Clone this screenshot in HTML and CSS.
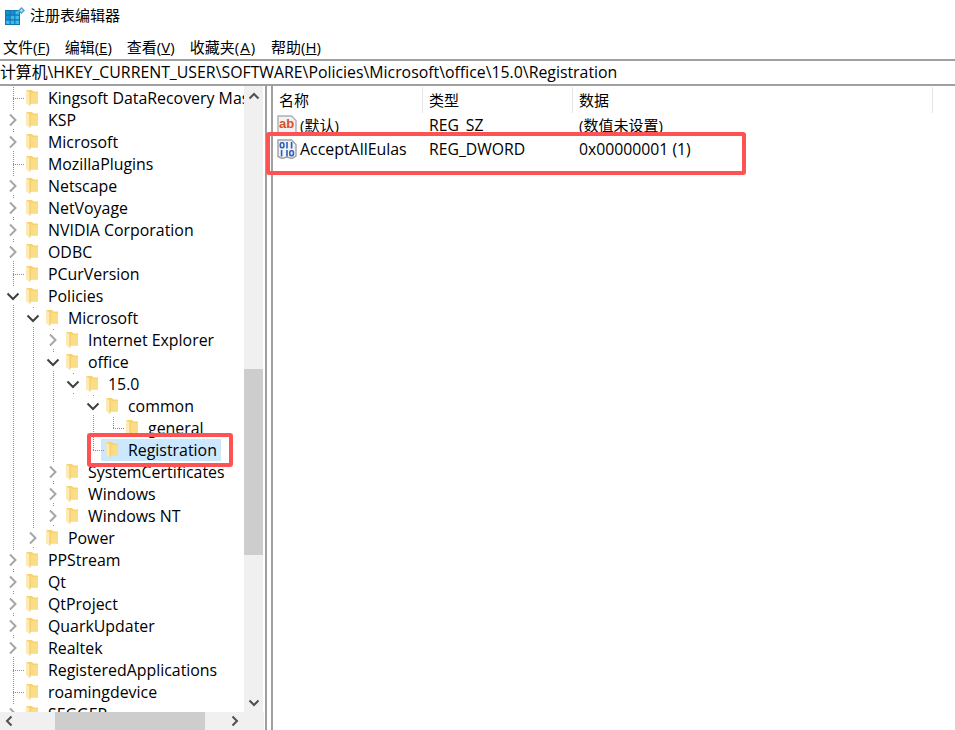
FILE: index.html
```html
<!DOCTYPE html>
<html lang="zh">
<head>
<meta charset="utf-8">
<title>注册表编辑器</title>
<link rel="stylesheet" href="styles.css">
</head>
<body>
<svg class="sprites" width="0" height="0" aria-hidden="true">
  <symbol id="folder" viewBox="0 0 12 16">
    <path d="M0.5 0H6L7.5 1.5H12V13.5H0.5Z" fill="#f7d26f"/>
    <path d="M4 3H12V13.5H4Z" fill="#fbdd85"/>
    <path d="M0.5 0.5L4 3V16L0.5 13.5Z" fill="#fdebb3"/>
    <path d="M4 3V15.5" stroke="#eebf58" stroke-width="0.8"/>
  </symbol>
  <symbol id="closed" viewBox="0 0 18 18">
    <path d="M6 3.5L11.5 9L6 14.5" fill="none" stroke="#a6a6a6" stroke-width="2"/>
  </symbol>
  <symbol id="open" viewBox="0 0 18 18">
    <path d="M3.5 6.5L9 12L14.5 6.5" fill="none" stroke="#404040" stroke-width="2"/>
  </symbol>
</svg>

<header class="titlebar">
  <svg class="app-icon" viewBox="0 0 20 18" width="20" height="18">
    <path d="M0 3H15V18H0Z" fill="#0f74b0"/>
    <path d="M1 4H4.6V7.6H1ZM5.7 4H9.3V7.6H5.7ZM1 8.7H4.6V12.3H1Z" fill="#1590d0"/>
    <path d="M10.4 4H14V7.6H10.4ZM5.7 8.7H9.3V12.3H5.7ZM10.4 8.7H14V12.3H10.4ZM1 13.4H4.6V17H1ZM5.7 13.4H9.3V17H5.7ZM10.4 13.4H14V17H10.4Z" fill="#3fb8ea"/>
    <path d="M16.5 0L20 3.5L16.5 7L13 3.5Z" fill="#4aa6d6"/>
    <path d="M16.5 2L18 3.5L16.5 5L15 3.5Z" fill="#bfe3f5"/>
  </svg>
  <span class="title">注册表编辑器</span>
</header>

<nav class="menubar">
  <span>文件(<u>F</u>)</span>
  <span>编辑(<u>E</u>)</span>
  <span>查看(<u>V</u>)</span>
  <span>收藏夹<span class="key-wide">(<u>A</u>)</span></span>
  <span>帮助(<u>H</u>)</span>
</nav>

<div class="address">计算机\HKEY_CURRENT_USER\SOFTWARE\Policies\Microsoft\office\15.0\Registration</div>

<main class="split">
  <section class="tree-pane">
    <div class="tree-area">
      <div class="tree">
        <div class="row"><i class="g h"></i><svg class="fd"><use href="#folder"/></svg><span>Kingsoft DataRecovery Master</span></div>
        <div class="row"><i class="g t"><svg class="ar"><use href="#closed"/></svg></i><svg class="fd"><use href="#folder"/></svg><span>KSP</span></div>
        <div class="row"><i class="g t"><svg class="ar"><use href="#closed"/></svg></i><svg class="fd"><use href="#folder"/></svg><span>Microsoft</span></div>
        <div class="row"><i class="g h"></i><svg class="fd"><use href="#folder"/></svg><span>MozillaPlugins</span></div>
        <div class="row"><i class="g t"><svg class="ar"><use href="#closed"/></svg></i><svg class="fd"><use href="#folder"/></svg><span>Netscape</span></div>
        <div class="row"><i class="g t"><svg class="ar"><use href="#closed"/></svg></i><svg class="fd"><use href="#folder"/></svg><span>NetVoyage</span></div>
        <div class="row"><i class="g t"><svg class="ar"><use href="#closed"/></svg></i><svg class="fd"><use href="#folder"/></svg><span>NVIDIA Corporation</span></div>
        <div class="row"><i class="g t"><svg class="ar"><use href="#closed"/></svg></i><svg class="fd"><use href="#folder"/></svg><span>ODBC</span></div>
        <div class="row"><i class="g h"></i><svg class="fd"><use href="#folder"/></svg><span>PCurVersion</span></div>
        <div class="row"><i class="g t"><svg class="ar"><use href="#open"/></svg></i><svg class="fd"><use href="#folder"/></svg><span>Policies</span></div>
        <div class="row"><i class="g v"></i><i class="g t"><svg class="ar"><use href="#open"/></svg></i><svg class="fd"><use href="#folder"/></svg><span>Microsoft</span></div>
        <div class="row"><i class="g v"></i><i class="g v"></i><i class="g t"><svg class="ar"><use href="#closed"/></svg></i><svg class="fd"><use href="#folder"/></svg><span>Internet Explorer</span></div>
        <div class="row"><i class="g v"></i><i class="g v"></i><i class="g t"><svg class="ar"><use href="#open"/></svg></i><svg class="fd"><use href="#folder"/></svg><span>office</span></div>
        <div class="row"><i class="g v"></i><i class="g v"></i><i class="g v"></i><i class="g t"><svg class="ar"><use href="#open"/></svg></i><svg class="fd"><use href="#folder"/></svg><span>15.0</span></div>
        <div class="row"><i class="g v"></i><i class="g v"></i><i class="g v"></i><i class="g"></i><i class="g t"><svg class="ar"><use href="#open"/></svg></i><svg class="fd"><use href="#folder"/></svg><span>common</span></div>
        <div class="row"><i class="g v"></i><i class="g v"></i><i class="g v"></i><i class="g"></i><i class="g v"></i><i class="g l"></i><svg class="fd"><use href="#folder"/></svg><span>general</span></div>
        <div class="row"><i class="g v"></i><i class="g v"></i><i class="g v"></i><i class="g"></i><i class="g l"></i><div class="sel"><svg class="fd"><use href="#folder"/></svg><span>Registration</span></div></div>
        <div class="row"><i class="g v"></i><i class="g v"></i><i class="g t"><svg class="ar"><use href="#closed"/></svg></i><svg class="fd"><use href="#folder"/></svg><span>SystemCertificates</span></div>
        <div class="row"><i class="g v"></i><i class="g v"></i><i class="g t"><svg class="ar"><use href="#closed"/></svg></i><svg class="fd"><use href="#folder"/></svg><span>Windows</span></div>
        <div class="row"><i class="g v"></i><i class="g v"></i><i class="g t"><svg class="ar"><use href="#closed"/></svg></i><svg class="fd"><use href="#folder"/></svg><span>Windows NT</span></div>
        <div class="row"><i class="g v"></i><i class="g t"><svg class="ar"><use href="#closed"/></svg></i><svg class="fd"><use href="#folder"/></svg><span>Power</span></div>
        <div class="row"><i class="g t"><svg class="ar"><use href="#closed"/></svg></i><svg class="fd"><use href="#folder"/></svg><span>PPStream</span></div>
        <div class="row"><i class="g t"><svg class="ar"><use href="#closed"/></svg></i><svg class="fd"><use href="#folder"/></svg><span>Qt</span></div>
        <div class="row"><i class="g t"><svg class="ar"><use href="#closed"/></svg></i><svg class="fd"><use href="#folder"/></svg><span>QtProject</span></div>
        <div class="row"><i class="g t"><svg class="ar"><use href="#closed"/></svg></i><svg class="fd"><use href="#folder"/></svg><span>QuarkUpdater</span></div>
        <div class="row"><i class="g t"><svg class="ar"><use href="#closed"/></svg></i><svg class="fd"><use href="#folder"/></svg><span>Realtek</span></div>
        <div class="row"><i class="g h"></i><svg class="fd"><use href="#folder"/></svg><span>RegisteredApplications</span></div>
        <div class="row"><i class="g h"></i><svg class="fd"><use href="#folder"/></svg><span>roamingdevice</span></div>
        <div class="row"><i class="g t"><svg class="ar"><use href="#closed"/></svg></i><svg class="fd"><use href="#folder"/></svg><span>SEGGER</span></div>
      </div>
      <div class="vscroll">
        <div class="sb-btn"><svg class="sb-ar" viewBox="0 0 12 8"><path d="M1.5 6.5L6 2L10.5 6.5" fill="none" stroke="#505050" stroke-width="2"/></svg></div>
        <div class="vtrack"><div class="vthumb"></div></div>
        <div class="sb-btn"><svg class="sb-ar" viewBox="0 0 12 8"><path d="M1.5 1.5L6 6L10.5 1.5" fill="none" stroke="#505050" stroke-width="2"/></svg></div>
      </div>
    </div>
    <div class="hscroll">
      <div class="hbtn"><svg class="hb-ar" viewBox="0 0 8 12"><path d="M6.5 1.5L2 6L6.5 10.5" fill="none" stroke="#505050" stroke-width="2"/></svg></div>
      <div class="htrack"><div class="hthumb"></div></div>
      <div class="hbtn"><svg class="hb-ar" viewBox="0 0 8 12"><path d="M1.5 1.5L6 6L1.5 10.5" fill="none" stroke="#505050" stroke-width="2"/></svg></div>
    </div>
  </section>

  <section class="list-pane">
    <div class="list-row list-head">
      <div class="hcell">名称</div>
      <div class="hcell">类型</div>
      <div class="hcell">数据</div>
    </div>
    <div class="list-row">
      <div class="name">
        <svg class="val-icon" viewBox="0 0 20 20" width="20" height="20">
          <path d="M1 1H14.5L19 5.5V17L15 19.5L10 18L5 19.5L1 17.5Z" fill="#f2f2f2" stroke="#b0b0b0" stroke-width="1.4"/>
          <text class="ab" x="2" y="13">ab</text>
        </svg>
        <span>(默认)</span>
      </div>
      <div class="latin">REG_SZ</div>
      <div>(数值未设置)</div>
    </div>
    <div class="list-row">
      <div class="name">
        <svg class="val-icon" viewBox="0 0 20 20" width="20" height="20">
          <path d="M1 1H14.5L19 5.5V17L15 19.5L10 18L5 19.5L1 17.5Z" fill="#f2f2f2" stroke="#a0a0a8" stroke-width="1.4"/>
          <g fill="none" stroke="#2a5fc0" stroke-width="1.6">
            <rect x="3.3" y="3.8" width="3.6" height="4.8" rx="1.4"/>
            <path d="M10 3V9.4M14.6 3V9.4M4.6 11V17.4M10 11V17.4"/>
            <rect x="12.8" y="11.8" width="3.6" height="4.8" rx="1.4"/>
          </g>
        </svg>
        <span class="latin-name">AcceptAllEulas</span>
      </div>
      <div class="latin">REG_DWORD</div>
      <div class="latin">0x00000001 (1)</div>
    </div>
  </section>
</main>

<div class="mark mark-tree"></div>
<div class="mark mark-list"></div>
</body>
</html>
```
FILE: styles.css
```css
* { box-sizing: border-box; }
html, body { margin: 0; height: 100%; }
body {
  position: relative;
  display: flex;
  flex-direction: column;
  width: 955px;
  height: 730px;
  overflow: hidden;
  background: #fff;
  color: #000;
  font: 15.9px/22px "Open Sans", "Noto Sans CJK SC", sans-serif;
}
.sprites { position: absolute; }

.titlebar { display: flex; align-items: flex-start; flex: 0 0 36px; padding: 7px 0 0 5px; gap: 5px; }
.app-icon { flex: none; }
.title { margin-top: -3px; font-size: 15px; }

.menubar { display: flex; flex: 0 0 23px; gap: 15px; padding-left: 3px; font-size: 15px; line-height: 22px; }
.key-wide { letter-spacing: 1px; }

.address {
  flex: 0 0 27px;
  border-top: 2px solid #a0a0a0;
  border-bottom: 2px solid #a0a0a0;
  font-size: 15.85px;
  line-height: 23px;
  white-space: nowrap;
}

.split { display: flex; flex: 1; min-height: 0; }

.tree-pane { display: flex; flex-direction: column; flex: 0 0 267px; padding-right: 1px; border-right: 2px solid #a0a0a0; }
.tree-area { display: flex; flex: 1; min-height: 0; }
.tree { flex: 0 0 244px; padding: 1px 0 0 3px; overflow: hidden; }
.row { display: flex; align-items: center; height: 22px; white-space: nowrap; }
.g { position: relative; flex: 0 0 20px; height: 22px; }
.v, .h, .t { background: repeating-linear-gradient(#8c8c8c 0 1px, transparent 1px 2px) no-repeat 10px 0 / 1px 100%; }
.l { background: repeating-linear-gradient(#8c8c8c 0 1px, transparent 1px 2px) no-repeat 10px 0 / 1px 50%; }
.h::after, .l::after {
  content: "";
  position: absolute;
  left: 10px;
  top: 11px;
  width: 11px;
  height: 1px;
  background: repeating-linear-gradient(90deg, #8c8c8c 0 1px, transparent 1px 2px);
}
.ar { display: block; width: 18px; height: 18px; margin: 2px 1px; background: #fff; }
.fd { flex: none; width: 12px; height: 16px; margin: 0 10px 0 3px; }
.sel { display: flex; align-items: center; height: 22px; margin-left: -2px; padding: 0 4px 0 2px; background: #cce8ff; }

.vscroll { display: flex; flex-direction: column; flex: 0 0 19px; background: #f0f0f0; }
.sb-btn { display: flex; align-items: center; justify-content: center; flex: 0 0 19px; }
.sb-ar { width: 12px; height: 8px; }
.vtrack { flex: 1; }
.vthumb { width: 100%; height: 186px; margin-top: 264px; background: #cdcdcd; }

.hscroll { display: flex; flex: 0 0 18px; background: #f0f0f0; }
.hbtn { display: flex; align-items: center; justify-content: center; flex: 0 0 18px; }
.hb-ar { width: 8px; height: 12px; }
.htrack { flex: 0 0 208px; }
.hthumb { width: 150px; height: 100%; margin-left: 37px; background: #cdcdcd; }

.list-pane { flex: 1; margin-left: 4px; padding-top: 1px; border-left: 2px solid #a0a0a0; }
.list-row { display: grid; grid-template-columns: 150px 150px 360px; height: 24px; line-height: 24px; font-size: 15px; }
.list-row > div { padding-left: 6px; white-space: nowrap; }
.list-row > .name { display: flex; align-items: center; padding-left: 4px; gap: 3px; }
.list-head { height: 26px; line-height: 26px; }
.hcell { border-right: 1px solid #e5e5e5; }
.latin { font-size: 15.75px; }
.latin-name { font-size: 15.9px; }
.val-icon { flex: none; }
.ab { font: 700 13px "Liberation Sans", sans-serif; fill: #d8502a; }

.mark { position: absolute; border: 4px solid #ff5252; border-radius: 3px; }
.mark-tree { left: 87px; top: 433px; width: 146px; height: 34px; }
.mark-list { left: 266px; top: 132px; width: 480px; height: 43px; }
```
